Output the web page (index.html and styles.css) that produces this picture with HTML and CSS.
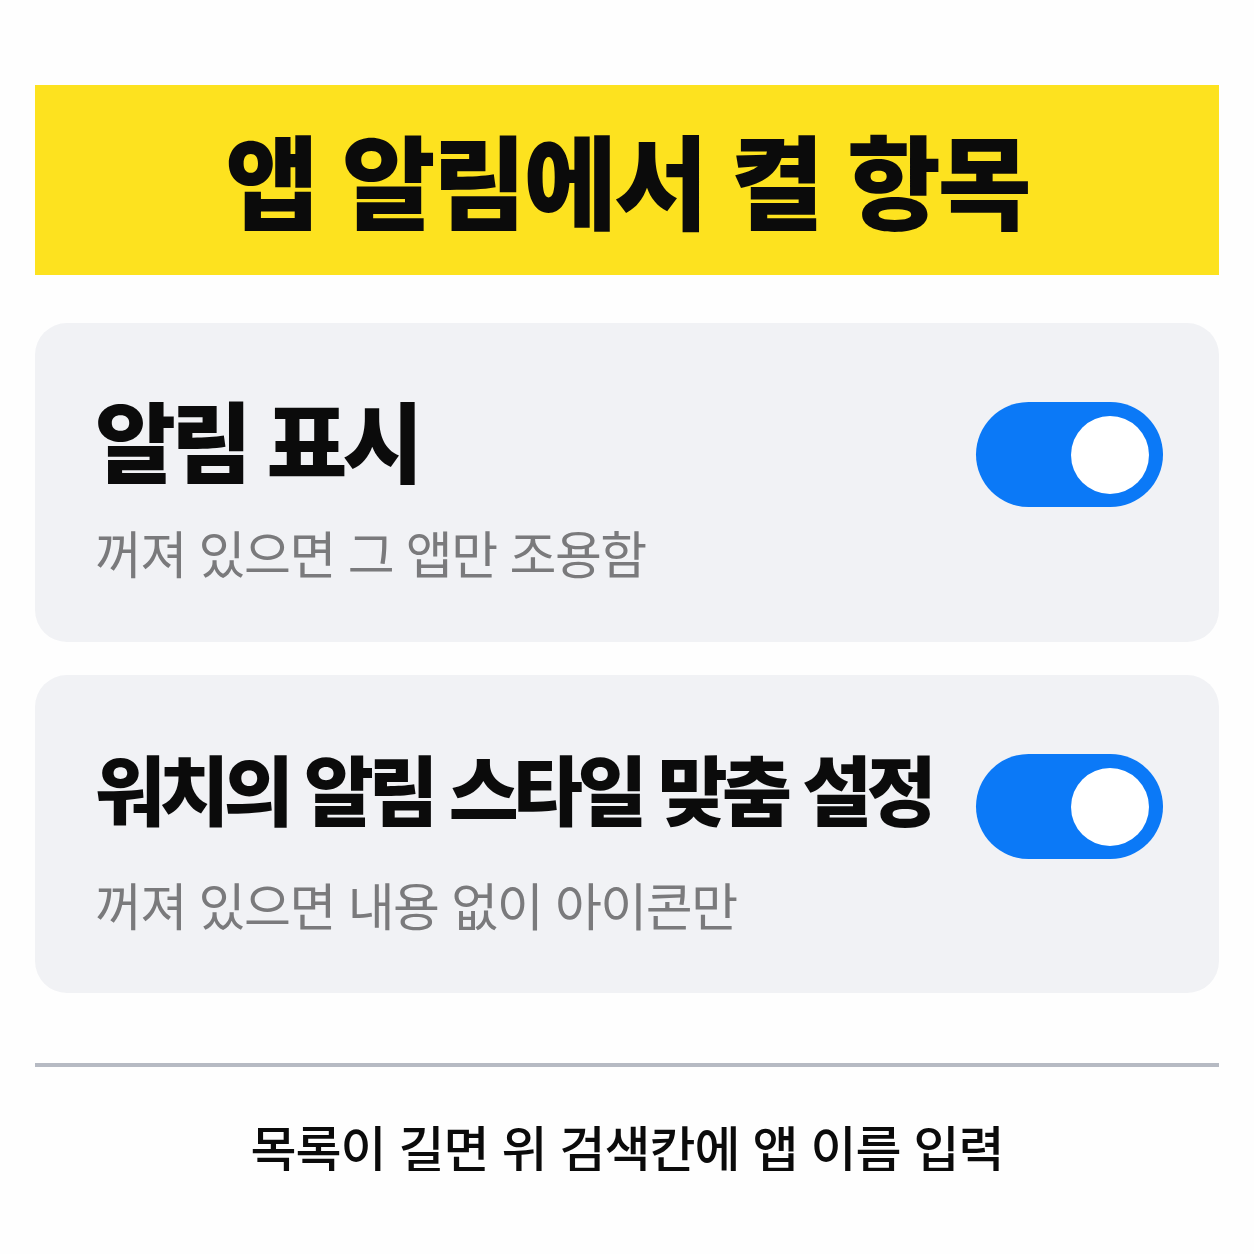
FILE: index.html
```html
<!DOCTYPE html>
<html lang="ko">
<head>
<meta charset="utf-8">
<meta name="viewport" content="width=device-width, initial-scale=1">
<link rel="stylesheet" href="styles.css">
<title>앱 알림에서 켤 항목</title>
</head>
<body>
<div class=page>
<div class=banner>앱 알림에서 켤 항목</div>

<div class="card first">
<div class=row>
<div class="label big">알림 표시</div>
<div class="switch on"><span class=knob></span></div>
</div>
<div class=hint>꺼져 있으면 그 앱만 조용함</div>
</div>

<div class=card>
<div class=row>
<div class=label>워치의 알림 스타일 맞춤 설정</div>
<div class="switch on"><span class=knob></span></div>
</div>
<div class=hint>꺼져 있으면 내용 없이 아이콘만</div>
</div>

<hr class=rule>
<div class=foot>목록이 길면 위 검색칸에 앱 이름 입력</div>
</div>
</body>
</html>
```

FILE: styles.css
```css
html,body{margin:0;background:#fefefe}
body{font-family:"Noto Sans CJK KR","Noto Sans",sans-serif;color:#0b0b0b}
.page{padding:85px 35px 0 35px}
.banner{height:190px;background:#fde21f;display:flex;align-items:center;justify-content:center;
font-size:102px;font-weight:900;letter-spacing:-3px;line-height:1;padding-bottom:4px;box-sizing:border-box;white-space:nowrap}
.card{background:#f1f2f5;border-radius:32px;height:318px;box-sizing:border-box;padding:71px 56px 0 60px;margin-top:33px}
.card.first{margin-top:48px;height:319px}
.row{display:flex;align-items:flex-start;justify-content:space-between;height:133px}
.label{font-size:76px;font-weight:900;letter-spacing:-5.5px;line-height:1;white-space:nowrap;margin-top:3px}
.label.big{font-size:88px;letter-spacing:-5px;margin-top:0}
.hint{font-size:51px;color:#7a7a7c;line-height:1;letter-spacing:-1.5px;white-space:nowrap}
.switch{width:187px;height:105px;border-radius:53px;background:#0b79f7;display:flex;align-items:center;
justify-content:flex-end;padding-right:14px;box-sizing:border-box;flex:none;margin-top:8px}
.knob{width:78px;height:78px;border-radius:50%;background:#fff;display:block}
.rule{border:0;height:4px;background:#b6bac3;margin:70px 0 0 0}
.foot{text-align:center;font-size:50px;font-weight:500;line-height:1;margin-top:54px;letter-spacing:-1px}
```
